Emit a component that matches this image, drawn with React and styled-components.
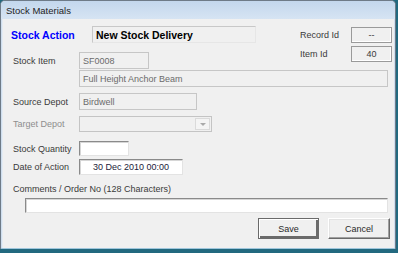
import React from 'react';
import styled, { createGlobalStyle } from 'styled-components';

const GlobalStyle = createGlobalStyle`
  html, body {
    margin: 0;
    padding: 0;
    background: #22697f;
  }
  body {
    width: 398px;
    height: 253px;
    overflow: hidden;
    font-family: "Liberation Sans", Arial, sans-serif;
  }
`;

const Window = styled.div`
  width: 394px;
  height: 248px;
  background: #cfdeee;
  border: 1px solid #6e7b88;
  border-bottom: none;
  border-radius: 5px 5px 0 0;
  display: flex;
  flex-direction: column;
  box-shadow: inset 0 -1px 0 #9fc6dc;
`;

const TitleBar = styled.div`
  height: 18px;
  display: flex;
  align-items: center;
  padding-left: 5px;
  font-size: 9.5px;
  color: #1e1e1e;
  background: linear-gradient(#c3d7ed, #d6e4f3);
  border-radius: 4px 4px 0 0;
`;

const Client = styled.div`
  flex: 1;
  margin: 0 1px 1px 1px;
  background: #f0f0f0;
  border-left: 1px solid #e4ecf4;
  padding: 7px 6px 0 10px;
  display: flex;
  flex-direction: column;
  font-size: 9px;
  color: #3a3a3a;
`;

const TopSection = styled.div`
  display: flex;
  justify-content: space-between;
  align-items: flex-start;
`;

const LeftColumn = styled.div`
  display: flex;
  flex-direction: column;
`;

const Row = styled.div`
  display: flex;
  align-items: center;
  margin-top: ${(p) => p.$gap || 0}px;
`;

const Label = styled.span`
  width: ${(p) => p.$width || 66}px;
  color: ${(p) => (p.$disabled ? '#8e8e8e' : '#3a3a3a')};
  white-space: nowrap;
`;

const ActionLabel = styled.span`
  width: 81px;
  margin-left: -2px;
  color: #0000ff;
  font-weight: bold;
  font-size: 10.5px;
`;

const ActionBox = styled.div`
  width: 159px;
  height: 15px;
  padding-left: 3px;
  display: flex;
  align-items: center;
  font-weight: bold;
  font-size: 10.5px;
  color: #000;
  border: 1px solid;
  border-color: #c8c8c8 #e6e6e6 #e6e6e6 #c8c8c8;
`;

const ReadBox = styled.div`
  width: ${(p) => p.$width}px;
  height: ${(p) => p.$height || 15}px;
  box-sizing: border-box;
  padding-left: 3px;
  display: flex;
  align-items: center;
  color: #6b6b6b;
  border: 1px solid #c6c6c6;
  background: #f0f0f0;
  white-space: nowrap;
`;

const IdGrid = styled.div`
  display: grid;
  grid-template-columns: 51px 41px;
  row-gap: 3px;
  align-items: center;
  margin-top: 1px;
  margin-right: -4px;
`;

const IdBox = styled.div`
  height: 16px;
  box-sizing: border-box;
  display: flex;
  align-items: center;
  justify-content: center;
  color: #3a3a3a;
  border: 1px solid #9a9a9a;
  box-shadow: inset -1px -1px 0 #fff;
`;

const TextInput = styled.div`
  width: ${(p) => p.$width}px;
  height: ${(p) => p.$height || 16}px;
  box-sizing: border-box;
  margin-left: ${(p) => p.$indent || 0}px;
  display: flex;
  align-items: center;
  justify-content: center;
  background: #fff;
  color: #1c1c3a;
  border: 1px solid;
  border-color: #8a8a8a #e3e3e3 #e3e3e3 #8a8a8a;
  box-shadow: inset 1px 1px 0 #d6d6d6;
`;

const Combo = styled.div`
  width: 133px;
  height: 16px;
  box-sizing: border-box;
  display: flex;
  justify-content: flex-end;
  align-items: stretch;
  padding: 1px;
  border: 1px solid #c4c4c4;
  background: #f0f0f0;
`;

const ComboButton = styled.div`
  width: 13px;
  display: flex;
  align-items: center;
  justify-content: center;
  border: 1px solid #dadada;
  background: #f4f4f4;

  &::after {
    content: '';
    border-left: 3px solid transparent;
    border-right: 3px solid transparent;
    border-top: 3px solid #a9a9a9;
  }
`;

const CommentsLabel = styled.div`
  margin-top: 8px;
  line-height: 12px;
`;

const ButtonRow = styled.div`
  display: flex;
  justify-content: flex-end;
  gap: 9px;
  margin-top: 5px;
  margin-right: -2px;
`;

const Button = styled.button`
  width: ${(p) => p.$width || 61}px;
  height: 21px;
  box-sizing: border-box;
  padding: 0;
  font-family: inherit;
  font-size: 9px;
  color: #2a2a2a;
  background: #f0f0f0;
  border: 1px solid;
  border-color: ${(p) => (p.$default ? '#6a6a6a' : '#ffffff #6a6a6a #6a6a6a #ffffff')};
  box-shadow: ${(p) =>
    p.$default
      ? 'inset 1px 1px 0 #fff, inset -2px -2px 0 #6a6a6a'
      : 'inset -1px -1px 0 #a0a0a0, inset 1px 1px 0 #e3e3e3'};
`;

export default function App() {
  return (
    <>
      <GlobalStyle />
      <Window>
        <TitleBar>Stock Materials</TitleBar>
        <Client>
          <TopSection>
            <LeftColumn>
              <Row>
                <ActionLabel>Stock Action</ActionLabel>
                <ActionBox>New Stock Delivery</ActionBox>
              </Row>
              <Row $gap={9}>
                <Label>Stock Item</Label>
                <ReadBox $width={70} $height={17}>SF0008</ReadBox>
              </Row>
            </LeftColumn>
            <IdGrid>
              <span>Record Id</span>
              <IdBox>--</IdBox>
              <span>Item Id</span>
              <IdBox>40</IdBox>
            </IdGrid>
          </TopSection>
          <Row $gap={1}>
            <Label />
            <ReadBox $width={309} $height={17}>Full Height Anchor Beam</ReadBox>
          </Row>
          <Row $gap={6}>
            <Label>Source Depot</Label>
            <ReadBox $width={118} $height={17}>Birdwell</ReadBox>
          </Row>
          <Row $gap={6}>
            <Label $disabled>Target Depot</Label>
            <Combo>
              <ComboButton />
            </Combo>
          </Row>
          <Row $gap={9}>
            <Label>Stock Quantity</Label>
            <TextInput $width={50} $height={15} />
          </Row>
          <Row $gap={3}>
            <Label>Date of Action</Label>
            <TextInput $width={104}>30 Dec 2010 00:00</TextInput>
          </Row>
          <CommentsLabel>Comments / Order No (128 Characters)</CommentsLabel>
          <Row $gap={3}>
            <TextInput $width={363} $height={15} $indent={12} />
          </Row>
          <ButtonRow>
            <Button $default>Save</Button>
            <Button $width={62}>Cancel</Button>
          </ButtonRow>
        </Client>
      </Window>
    </>
  );
}
